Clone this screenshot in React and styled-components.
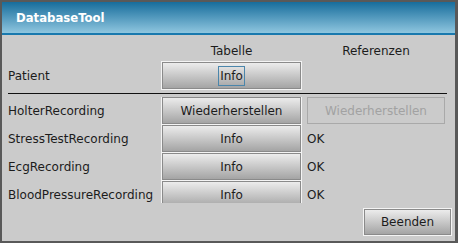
import React from "react";
import styled, { createGlobalStyle, css } from "styled-components";

const Global = createGlobalStyle`
  html, body { margin: 0; padding: 0; background: #595959; }
  body { font-family: "DejaVu Sans", sans-serif; font-size: 12px; color: #1c1c1c; }
`;

const Window = styled.div`
  box-sizing: border-box;
  width: 458px;
  height: 243px;
  background: #595959;
  padding: 2px 3px 2px 2px;
  display: flex;
  flex-direction: column;
`;

const TitleBar = styled.div`
  height: 31px;
  flex: none;
  display: flex;
  align-items: center;
  padding-left: 14px;
  background: linear-gradient(#176d9c, #8fc6df);
  border-bottom: 2px solid #1979ae;
  color: #ffffff;
  font-family: "DejaVu Sans Condensed", "DejaVu Sans", sans-serif;
  font-weight: bold;
  font-size: 13px;
`;

const Content = styled.div`
  flex: 1;
  background: #cbcbcb;
  display: flex;
  flex-direction: column;
  padding: 5px 4px 0 6px;
  overflow: hidden;
`;

const Grid = styled.div`
  display: grid;
  grid-template-columns: 148px 139px 138px;
  column-gap: 6px;
  align-items: center;
`;

const HeaderCell = styled.div`
  height: 22px;
  line-height: 22px;
  text-align: center;
`;

const Label = styled.div`
  white-space: nowrap;
`;

const Button = styled.button`
  box-sizing: border-box;
  height: 27px;
  width: 100%;
  margin: 0;
  padding: 0;
  font-family: "DejaVu Sans", sans-serif;
  font-size: 12px;
  color: #1c1c1c;
  border: 1px solid #8a8a8a;
  outline: 1px solid #f4f4f4;
  background: linear-gradient(#ececec, #a4a4a4);
  display: flex;
  align-items: center;
  justify-content: center;
  ${(p) =>
    p.disabled &&
    css`
      background: #cbcbcb;
      border-color: #a9a9a9;
      outline: none;
      color: #a2a2a2;
    `}
`;

const Focus = styled.span`
  border: 1px solid #4b86ab;
  padding: 2px 1px;
  line-height: 14px;
`;

const Separator = styled.div`
  height: 1px;
  background: #111;
  margin: 4px 4px 3px 0;
`;

const ClipArea = styled.div`
  height: 106px;
  overflow: hidden;
`;

const Rows = styled(Grid)`
  row-gap: 1px;
`;

const Status = styled.div`
  white-space: nowrap;
`;

const Footer = styled.div`
  display: flex;
  justify-content: flex-end;
  margin-top: 6px;
`;

const EndButton = styled(Button)`
  width: 87px;
  height: 26px;
`;

const recordings = [
  { name: "HolterRecording", action: "Wiederherstellen", ref: "Wiederherstellen" },
  { name: "StressTestRecording", action: "Info", status: "OK" },
  { name: "EcgRecording", action: "Info", status: "OK" },
  { name: "BloodPressureRecording", action: "Info", status: "OK" },
];

export default function App() {
  return (
    <>
      <Global />
      <Window>
        <TitleBar>DatabaseTool</TitleBar>
        <Content>
          <Grid>
            <div />
            <HeaderCell>Tabelle</HeaderCell>
            <HeaderCell>Referenzen</HeaderCell>
            <Label>Patient</Label>
            <Button>
              <Focus>Info</Focus>
            </Button>
            <div />
          </Grid>
          <Separator />
          <ClipArea>
            <Rows>
              {recordings.map((r) => (
                <React.Fragment key={r.name}>
                  <Label>{r.name}</Label>
                  <Button>{r.action}</Button>
                  {r.ref ? (
                    <Button disabled>{r.ref}</Button>
                  ) : (
                    <Status>{r.status}</Status>
                  )}
                </React.Fragment>
              ))}
            </Rows>
          </ClipArea>
          <Footer>
            <EndButton>Beenden</EndButton>
          </Footer>
        </Content>
      </Window>
    </>
  );
}
